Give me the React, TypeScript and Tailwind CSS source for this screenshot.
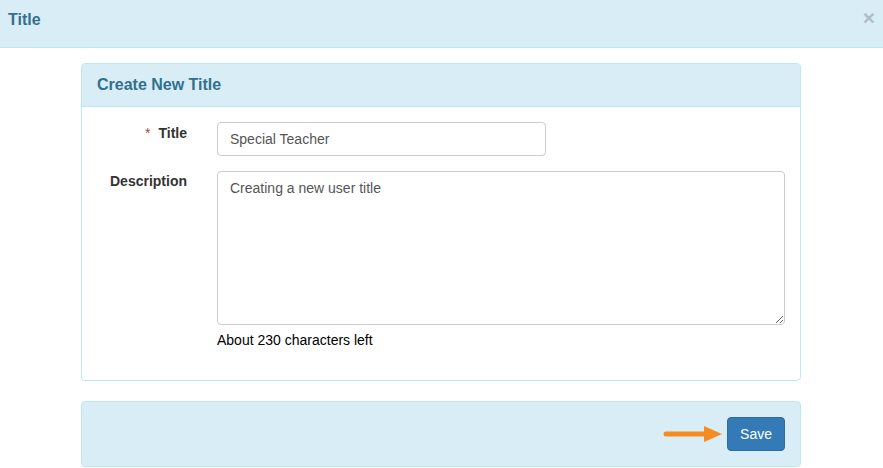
import React from 'react';

export default function App() {
    return (
        <div className="w-[883px] h-[468px] bg-white text-[14px] text-[#333] leading-[20px] overflow-hidden" style={{ fontFamily: '"Liberation Sans", Arial, sans-serif' }}>
            {/* Modal header */}
            <div className="h-[48px] bg-[#d9edf7] border-b border-[#bce8f1] flex items-start justify-between pl-[8px] pr-[8px] pt-[10px]">
                <h4 className="text-[16px] font-bold text-[#31708f] leading-[20px]">Title</h4>
                <span className="text-[21px] font-bold text-[#aebec6] leading-[18px] mt-[-1px]">×</span>
            </div>

            {/* Body */}
            <div className="pt-[15px] pl-[81px]">
                <div className="w-[720px] border border-[#bce8f1] rounded-[4px]">
                    <div className="h-[43px] bg-[#d9edf7] border-b border-[#bce8f1] px-[15px] flex items-center rounded-t-[3px]">
                        <h3 className="text-[16px] font-bold text-[#31708f]">Create New Title</h3>
                    </div>
                    <div className="pt-[15px] pb-[15px] pr-[15px]">
                        <div className="flex mb-[15px]">
                            <label className="w-[105px] text-right pt-[1px] font-bold shrink-0">
                                <span className="text-[#a94442] font-normal mr-[8px]">*</span>Title
                            </label>
                            <div className="ml-[30px] w-[329px]">
                                <input
                                    className="w-full h-[34px] border border-[#ccc] rounded-[4px] px-[12px] text-[#555] outline-none"
                                    defaultValue="Special Teacher"
                                />
                            </div>
                        </div>
                        <div className="flex mb-[15px]">
                            <label className="w-[105px] text-right font-bold shrink-0">Description</label>
                            <div className="ml-[30px] flex-1">
                                <textarea
                                    className="block w-full h-[154px] border border-[#ccc] rounded-[4px] px-[12px] py-[6px] text-[#555] outline-none"
                                    defaultValue="Creating a new user title"
                                />
                                <p className="mt-[5px] text-black">About 230 characters left</p>
                            </div>
                        </div>
                    </div>
                </div>

                {/* Footer panel */}
                <div className="mt-[20px] w-[720px] h-[66px] bg-[#d9edf7] border border-[#bce8f1] rounded-[4px] flex items-center justify-end pr-[15px]">
                    <svg width="60" height="20" viewBox="0 0 60 20" className="mr-[4px]">
                        <line x1="3" y1="10" x2="44" y2="10" stroke="#f68b1f" strokeWidth="5" strokeLinecap="round" />
                        <polygon points="41,2 59,10 41,18" fill="#f68b1f" />
                    </svg>
                    <button className="h-[34px] px-[12px] bg-[#337ab7] border border-[#2e6da4] rounded-[4px] text-white">Save</button>
                </div>
            </div>
        </div>
    );
}
